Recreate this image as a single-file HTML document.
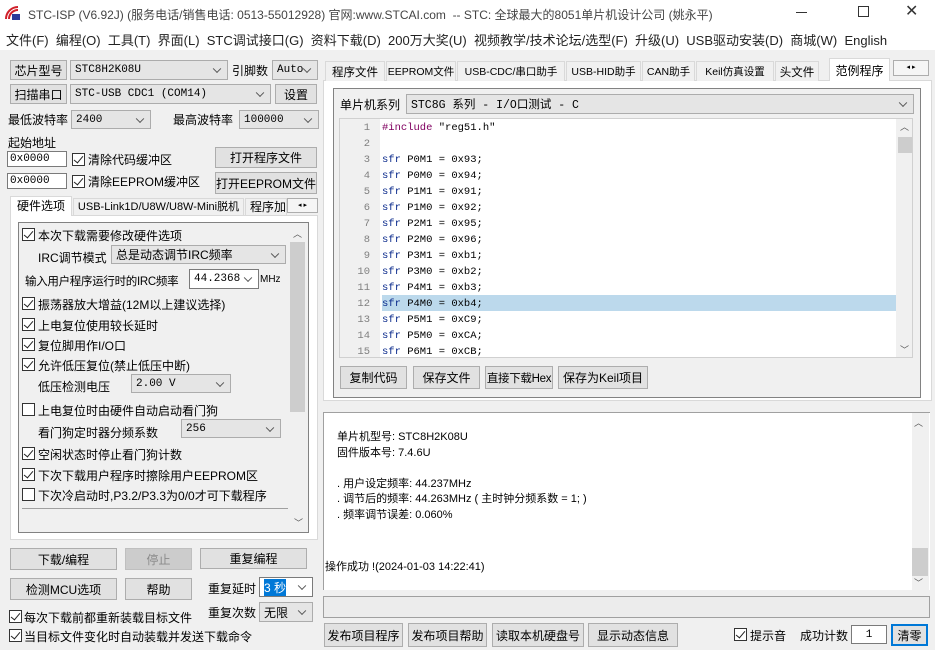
<!DOCTYPE html>
<html><head><meta charset="utf-8">
<style>
*{box-sizing:border-box;margin:0;padding:0}
body{width:935px;height:650px;overflow:hidden;background:#f0f0f0;font-family:"Liberation Sans","Noto Sans CJK SC",sans-serif;font-size:12px;color:#000;position:relative}
.a{position:absolute;white-space:nowrap}
.btn{position:absolute;background:#e1e1e1;border:1px solid #adadad;text-align:center;font-size:12px;display:flex;align-items:center;justify-content:center;white-space:nowrap}
.cb{position:absolute;background:#e5e5e5;border:1px solid #acacac;font-family:"Liberation Mono","Noto Sans CJK SC",monospace;font-size:11px;padding-left:4px;display:flex;align-items:center;white-space:nowrap}
.cb.w{background:#fff;border-color:#7a7a7a}
.cb::after{content:"";position:absolute;right:7px;top:50%;width:5px;height:5px;border-right:1px solid #555;border-bottom:1px solid #555;transform:translateY(-70%) rotate(45deg)}
.ck{position:absolute;width:13px;height:13px;border:1px solid #333;background:#fff;margin-top:2px}
.ck.on::after{content:"";position:absolute;left:3px;top:0px;width:4px;height:8px;border-right:1.3px solid #222;border-bottom:1.3px solid #222;transform:rotate(40deg)}
.t{position:absolute;white-space:nowrap;font-size:12px}
.inp{position:absolute;background:#fff;border:1px solid #7a7a7a;font-family:"Liberation Mono",monospace;font-size:11px;padding-left:2px;display:flex;align-items:center}
.tab{position:absolute;top:61px;height:20px;border:1px solid #d9d9d9;border-bottom:none;background:#f0f0f0;font-size:11.5px;display:flex;align-items:center;justify-content:center;white-space:nowrap}
.code{font-family:"Liberation Mono",monospace;font-size:10.5px}
.ln{position:absolute;left:0;width:30px;text-align:right;color:#808080}
.cl{position:absolute;left:42px}
.k{color:#0a2a8c}
</style></head><body>
<div class="a" style="left:0;top:0;width:935px;height:50px;background:#fff"></div>
<svg class="a" style="left:5px;top:5px" width="16" height="16"><path d="M1 14 A12 12 0 0 1 13 2" stroke="#d0202a" stroke-width="2" fill="none"/><path d="M4 14 A9 9 0 0 1 13 5" stroke="#d0202a" stroke-width="2" fill="none"/><rect x="7" y="9" width="8" height="6" fill="#2a3a9a"/></svg>
<div class="a" style="left:28px;top:6px;font-size:12px;color:#444">STC-ISP (V6.92J) (服务电话/销售电话: 0513-55012928) 官网:www.STCAI.com &nbsp;-- STC: 全球最大的8051单片机设计公司 (姚永平)</div>
<div class="a" style="left:796px;top:12px;width:11px;height:1px;background:#333"></div>
<div class="a" style="left:858px;top:6px;width:11px;height:11px;border:1px solid #333"></div>
<div class="a" style="left:905px;top:1px;font-size:16px;color:#333">✕</div>
<div class="a" style="left:6px;top:30px;font-size:13px;color:#222">文件(F) &nbsp;编程(O) &nbsp;工具(T) &nbsp;界面(L) &nbsp;STC调试接口(G) &nbsp;资料下载(D) &nbsp;200万大奖(U) &nbsp;视频教学/技术论坛/选型(F) &nbsp;升级(U) &nbsp;USB驱动安装(D) &nbsp;商城(W) &nbsp;English</div>

<div class="btn" style="left:10px;top:60px;width:57px;height:20px">芯片型号</div>
<div class="cb" style="left:70px;top:60px;width:158px;height:20px">STC8H2K08U</div>
<div class="t" style="left:232px;top:62px">引脚数</div>
<div class="cb" style="left:272px;top:60px;width:46px;height:20px">Auto</div>
<div class="btn" style="left:10px;top:84px;width:57px;height:20px">扫描串口</div>
<div class="cb" style="left:70px;top:84px;width:201px;height:20px">STC-USB CDC1 (COM14)</div>
<div class="btn" style="left:275px;top:84px;width:42px;height:20px">设置</div>
<div class="t" style="left:8px;top:111px">最低波特率</div>
<div class="cb" style="left:71px;top:110px;width:80px;height:19px">2400</div>
<div class="t" style="left:173px;top:111px">最高波特率</div>
<div class="cb" style="left:239px;top:110px;width:80px;height:19px">100000</div>
<div class="t" style="left:8px;top:134px">起始地址</div>
<div class="inp" style="left:7px;top:151px;width:60px;height:16px">0x0000</div>
<div class="inp" style="left:7px;top:173px;width:60px;height:16px">0x0000</div>
<div class="ck on" style="left:72px;top:151px"></div><div class="t" style="left:88px;top:151px">清除代码缓冲区</div>
<div class="ck on" style="left:72px;top:173px"></div><div class="t" style="left:88px;top:173px">清除EEPROM缓冲区</div>
<div class="btn" style="left:215px;top:147px;width:102px;height:21px">打开程序文件</div>
<div class="btn" style="left:215px;top:172px;width:102px;height:22px">打开EEPROM文件</div>

<div class="a" style="left:10px;top:215px;width:308px;height:325px;background:#fff;border:1px solid #d9d9d9"></div>
<div class="a" style="left:10px;top:196px;width:62px;height:20px;background:#fff;border:1px solid #d9d9d9;border-bottom:none;font-size:12px;text-align:center;line-height:19px">硬件选项</div>
<div class="a" style="left:73px;top:198px;width:171px;height:18px;border:1px solid #d9d9d9;border-bottom:none;font-size:11px;text-align:center;line-height:17px">USB-Link1D/U8W/U8W-Mini脱机</div>
<div class="a" style="left:245px;top:198px;width:42px;height:18px;border:1px solid #d9d9d9;border-bottom:none;overflow:hidden;font-size:12px;padding-left:4px;line-height:17px">程序加</div>
<div class="a" style="left:287px;top:198px;width:31px;height:15px;border:1px solid #adadad;background:#f5f5f5;font-size:7px;line-height:13px;text-align:center">◂ ▸</div>
<div class="a" style="left:18px;top:222px;width:291px;height:311px;border:1px solid #828282;background:#f0f0f0"></div>
<div class="a" style="left:290px;top:242px;width:15px;height:170px;background:#cdcdcd"></div>
<div class="a" style="left:293px;top:227px;font-size:9px;color:#555">︿</div>
<div class="a" style="left:294px;top:516px;font-size:9px;color:#555">﹀</div>
<div class="a" style="left:22px;top:508px;width:266px;height:1px;background:#a0a0a0"></div>

<div class="ck on" style="left:22px;top:226px"></div><div class="t" style="left:38px;top:227px">本次下载需要修改硬件选项</div>
<div class="t" style="left:38px;top:249px">IRC调节模式</div>
<div class="cb" style="left:111px;top:245px;width:175px;height:19px;font-family:'Liberation Sans','Noto Sans CJK SC',sans-serif;font-size:12px">总是动态调节IRC频率</div>
<div class="t" style="left:25px;top:273px;font-size:11.5px;letter-spacing:-0.3px">输入用户程序运行时的IRC频率</div>
<div class="cb w" style="left:189px;top:269px;width:70px;height:20px">44.2368</div>
<div class="t" style="left:260px;top:274px;font-size:10px">MHz</div>
<div class="ck on" style="left:22px;top:295px"></div><div class="t" style="left:38px;top:296px">振荡器放大增益(12M以上建议选择)</div>
<div class="ck on" style="left:22px;top:316px"></div><div class="t" style="left:38px;top:317px">上电复位使用较长延时</div>
<div class="ck on" style="left:22px;top:336px"></div><div class="t" style="left:38px;top:337px">复位脚用作I/O口</div>
<div class="ck on" style="left:22px;top:356px"></div><div class="t" style="left:38px;top:357px">允许低压复位(禁止低压中断)</div>
<div class="t" style="left:38px;top:378px">低压检测电压</div>
<div class="cb" style="left:131px;top:374px;width:100px;height:19px">2.00 V</div>
<div class="ck" style="left:22px;top:401px"></div><div class="t" style="left:38px;top:402px">上电复位时由硬件自动启动看门狗</div>
<div class="t" style="left:38px;top:424px">看门狗定时器分频系数</div>
<div class="cb" style="left:181px;top:419px;width:100px;height:19px">256</div>
<div class="ck on" style="left:22px;top:445px"></div><div class="t" style="left:38px;top:446px">空闲状态时停止看门狗计数</div>
<div class="ck on" style="left:22px;top:466px"></div><div class="t" style="left:38px;top:467px">下次下载用户程序时擦除用户EEPROM区</div>
<div class="ck" style="left:22px;top:486px"></div><div class="t" style="left:38px;top:487px">下次冷启动时,P3.2/P3.3为0/0才可下载程序</div>

<div class="btn" style="left:10px;top:548px;width:107px;height:22px">下载/编程</div>
<div class="btn" style="left:125px;top:548px;width:67px;height:22px;background:#cccccc;border-color:#bfbfbf;color:#8a8a8a">停止</div>
<div class="btn" style="left:200px;top:548px;width:107px;height:21px">重复编程</div>
<div class="btn" style="left:10px;top:578px;width:107px;height:22px">检测MCU选项</div>
<div class="btn" style="left:125px;top:578px;width:67px;height:22px">帮助</div>
<div class="t" style="left:208px;top:580px">重复延时</div>
<div class="cb w" style="left:259px;top:577px;width:54px;height:20px;font-family:'Liberation Sans','Noto Sans CJK SC',sans-serif;font-size:12px"><span style="background:#0078d7;color:#fff">3 秒</span></div>
<div class="t" style="left:208px;top:604px">重复次数</div>
<div class="cb" style="left:259px;top:602px;width:54px;height:20px;font-family:'Liberation Sans','Noto Sans CJK SC',sans-serif;font-size:12px">无限</div>
<div class="ck on" style="left:9px;top:608px"></div><div class="t" style="left:24px;top:609px">每次下载前都重新装载目标文件</div>
<div class="ck on" style="left:9px;top:627px"></div><div class="t" style="left:24px;top:628px">当目标文件变化时自动装载并发送下载命令</div>

<div class="a" style="left:323px;top:80px;width:609px;height:321px;background:#fff;border:1px solid #d9d9d9"></div>
<div class="tab" style="left:325px;width:60px">程序文件</div>
<div class="tab" style="left:386px;width:70px;font-size:10.5px">EEPROM文件</div>
<div class="tab" style="left:457px;width:108px;font-size:10.5px">USB-CDC/串口助手</div>
<div class="tab" style="left:566px;width:75px;font-size:10.5px">USB-HID助手</div>
<div class="tab" style="left:642px;width:53px;font-size:10.5px">CAN助手</div>
<div class="tab" style="left:696px;width:78px;font-size:10.5px">Keil仿真设置</div>
<div class="tab" style="left:775px;width:44px">头文件</div>
<div class="tab" style="left:829px;top:58px;width:61px;height:23px;background:#fff;font-size:12px">范例程序</div>
<div class="a" style="left:893px;top:60px;width:36px;height:16px;border:1px solid #adadad;background:#f5f5f5;font-size:7px;line-height:14px;text-align:center">◂ ▸</div>

<div class="a" style="left:333px;top:88px;width:588px;height:310px;border:1px solid #828282;background:#f0f0f0"></div>
<div class="t" style="left:340px;top:96px">单片机系列</div>
<div class="cb" style="left:406px;top:94px;width:508px;height:20px;font-size:11.5px">STC8G 系列 - I/O口测试 - C</div>
<div class="a code" style="left:339px;top:118px;width:574px;height:240px;background:#fff;border:1px solid #d0d0d0;overflow:hidden">
<div class="a" style="left:0;top:0;width:40px;height:240px;background:#f0f0f0"></div>
<div class="a" style="left:42px;top:176px;width:515px;height:16px;background:#bcd9ec"></div>
<div class="a" style="left:556px;top:0;width:17px;height:240px;background:#f0f0f0"></div>
<div class="a" style="left:558px;top:18px;width:14px;height:16px;background:#cdcdcd"></div>
<div class="a" style="left:560px;top:1px;font-size:9px;color:#555">︿</div>
<div class="a" style="left:560px;top:224px;font-size:9px;color:#555">﹀</div>
<div class="ln" style="top:3px">1</div><div class="cl" style="top:3px"><span style="color:#800060">#include</span> "reg51.h"</div>
<div class="ln" style="top:19px">2</div>
<div class="ln" style="top:35px">3</div><div class="cl" style="top:35px"><span class="k">sfr</span> P0M1 = 0x93;</div>
<div class="ln" style="top:51px">4</div><div class="cl" style="top:51px"><span class="k">sfr</span> P0M0 = 0x94;</div>
<div class="ln" style="top:67px">5</div><div class="cl" style="top:67px"><span class="k">sfr</span> P1M1 = 0x91;</div>
<div class="ln" style="top:83px">6</div><div class="cl" style="top:83px"><span class="k">sfr</span> P1M0 = 0x92;</div>
<div class="ln" style="top:99px">7</div><div class="cl" style="top:99px"><span class="k">sfr</span> P2M1 = 0x95;</div>
<div class="ln" style="top:115px">8</div><div class="cl" style="top:115px"><span class="k">sfr</span> P2M0 = 0x96;</div>
<div class="ln" style="top:131px">9</div><div class="cl" style="top:131px"><span class="k">sfr</span> P3M1 = 0xb1;</div>
<div class="ln" style="top:147px">10</div><div class="cl" style="top:147px"><span class="k">sfr</span> P3M0 = 0xb2;</div>
<div class="ln" style="top:163px">11</div><div class="cl" style="top:163px"><span class="k">sfr</span> P4M1 = 0xb3;</div>
<div class="ln" style="top:179px">12</div><div class="cl" style="top:179px"><span class="k">sfr</span> P4M0 = 0xb4;</div>
<div class="ln" style="top:195px">13</div><div class="cl" style="top:195px"><span class="k">sfr</span> P5M1 = 0xC9;</div>
<div class="ln" style="top:211px">14</div><div class="cl" style="top:211px"><span class="k">sfr</span> P5M0 = 0xCA;</div>
<div class="ln" style="top:227px">15</div><div class="cl" style="top:227px"><span class="k">sfr</span> P6M1 = 0xCB;</div>
</div>
<div class="btn" style="left:340px;top:366px;width:67px;height:23px">复制代码</div>
<div class="btn" style="left:413px;top:366px;width:67px;height:23px">保存文件</div>
<div class="btn" style="left:485px;top:366px;width:68px;height:23px;font-size:11.5px;letter-spacing:-0.3px">直接下载Hex</div>
<div class="btn" style="left:558px;top:366px;width:90px;height:23px;font-size:12px">保存为Keil项目</div>

<div class="a" style="left:323px;top:412px;width:607px;height:178px;background:#fff;border:1px solid #a0a0a0;border-right:none;border-bottom:none"></div>
<div class="a" style="left:912px;top:413px;width:17px;height:177px;background:#f0f0f0"></div>
<div class="a" style="left:912px;top:548px;width:16px;height:28px;background:#cdcdcd"></div>
<div class="a" style="left:914px;top:416px;font-size:9px;color:#555">︿</div>
<div class="a" style="left:914px;top:576px;font-size:9px;color:#555">﹀</div>
<div class="a" style="left:337px;top:430px;font-size:11px;line-height:15.5px">单片机型号: STC8H2K08U<br>固件版本号: 7.4.6U<br><br>. 用户设定频率: 44.237MHz<br>. 调节后的频率: 44.263MHz ( 主时钟分频系数 = 1; )<br>. 频率调节误差: 0.060%</div>
<div class="a" style="left:325px;top:558px;font-size:11px">操作成功 !(2024-01-03 14:22:41)</div>
<div class="a" style="left:323px;top:596px;width:607px;height:22px;border:1px solid #a0a0a0;background:#ececec"></div>

<div class="btn" style="left:324px;top:623px;width:79px;height:24px">发布项目程序</div>
<div class="btn" style="left:408px;top:623px;width:79px;height:24px">发布项目帮助</div>
<div class="btn" style="left:492px;top:623px;width:92px;height:24px">读取本机硬盘号</div>
<div class="btn" style="left:588px;top:623px;width:90px;height:24px">显示动态信息</div>
<div class="ck on" style="left:734px;top:626px"></div><div class="t" style="left:750px;top:627px">提示音</div>
<div class="t" style="left:800px;top:627px">成功计数</div>
<div class="inp" style="left:851px;top:625px;width:36px;height:19px;justify-content:center;padding:0">1</div>
<div class="btn" style="left:891px;top:624px;width:37px;height:22px;border:2px solid #0078d7">清零</div>
</body></html>
